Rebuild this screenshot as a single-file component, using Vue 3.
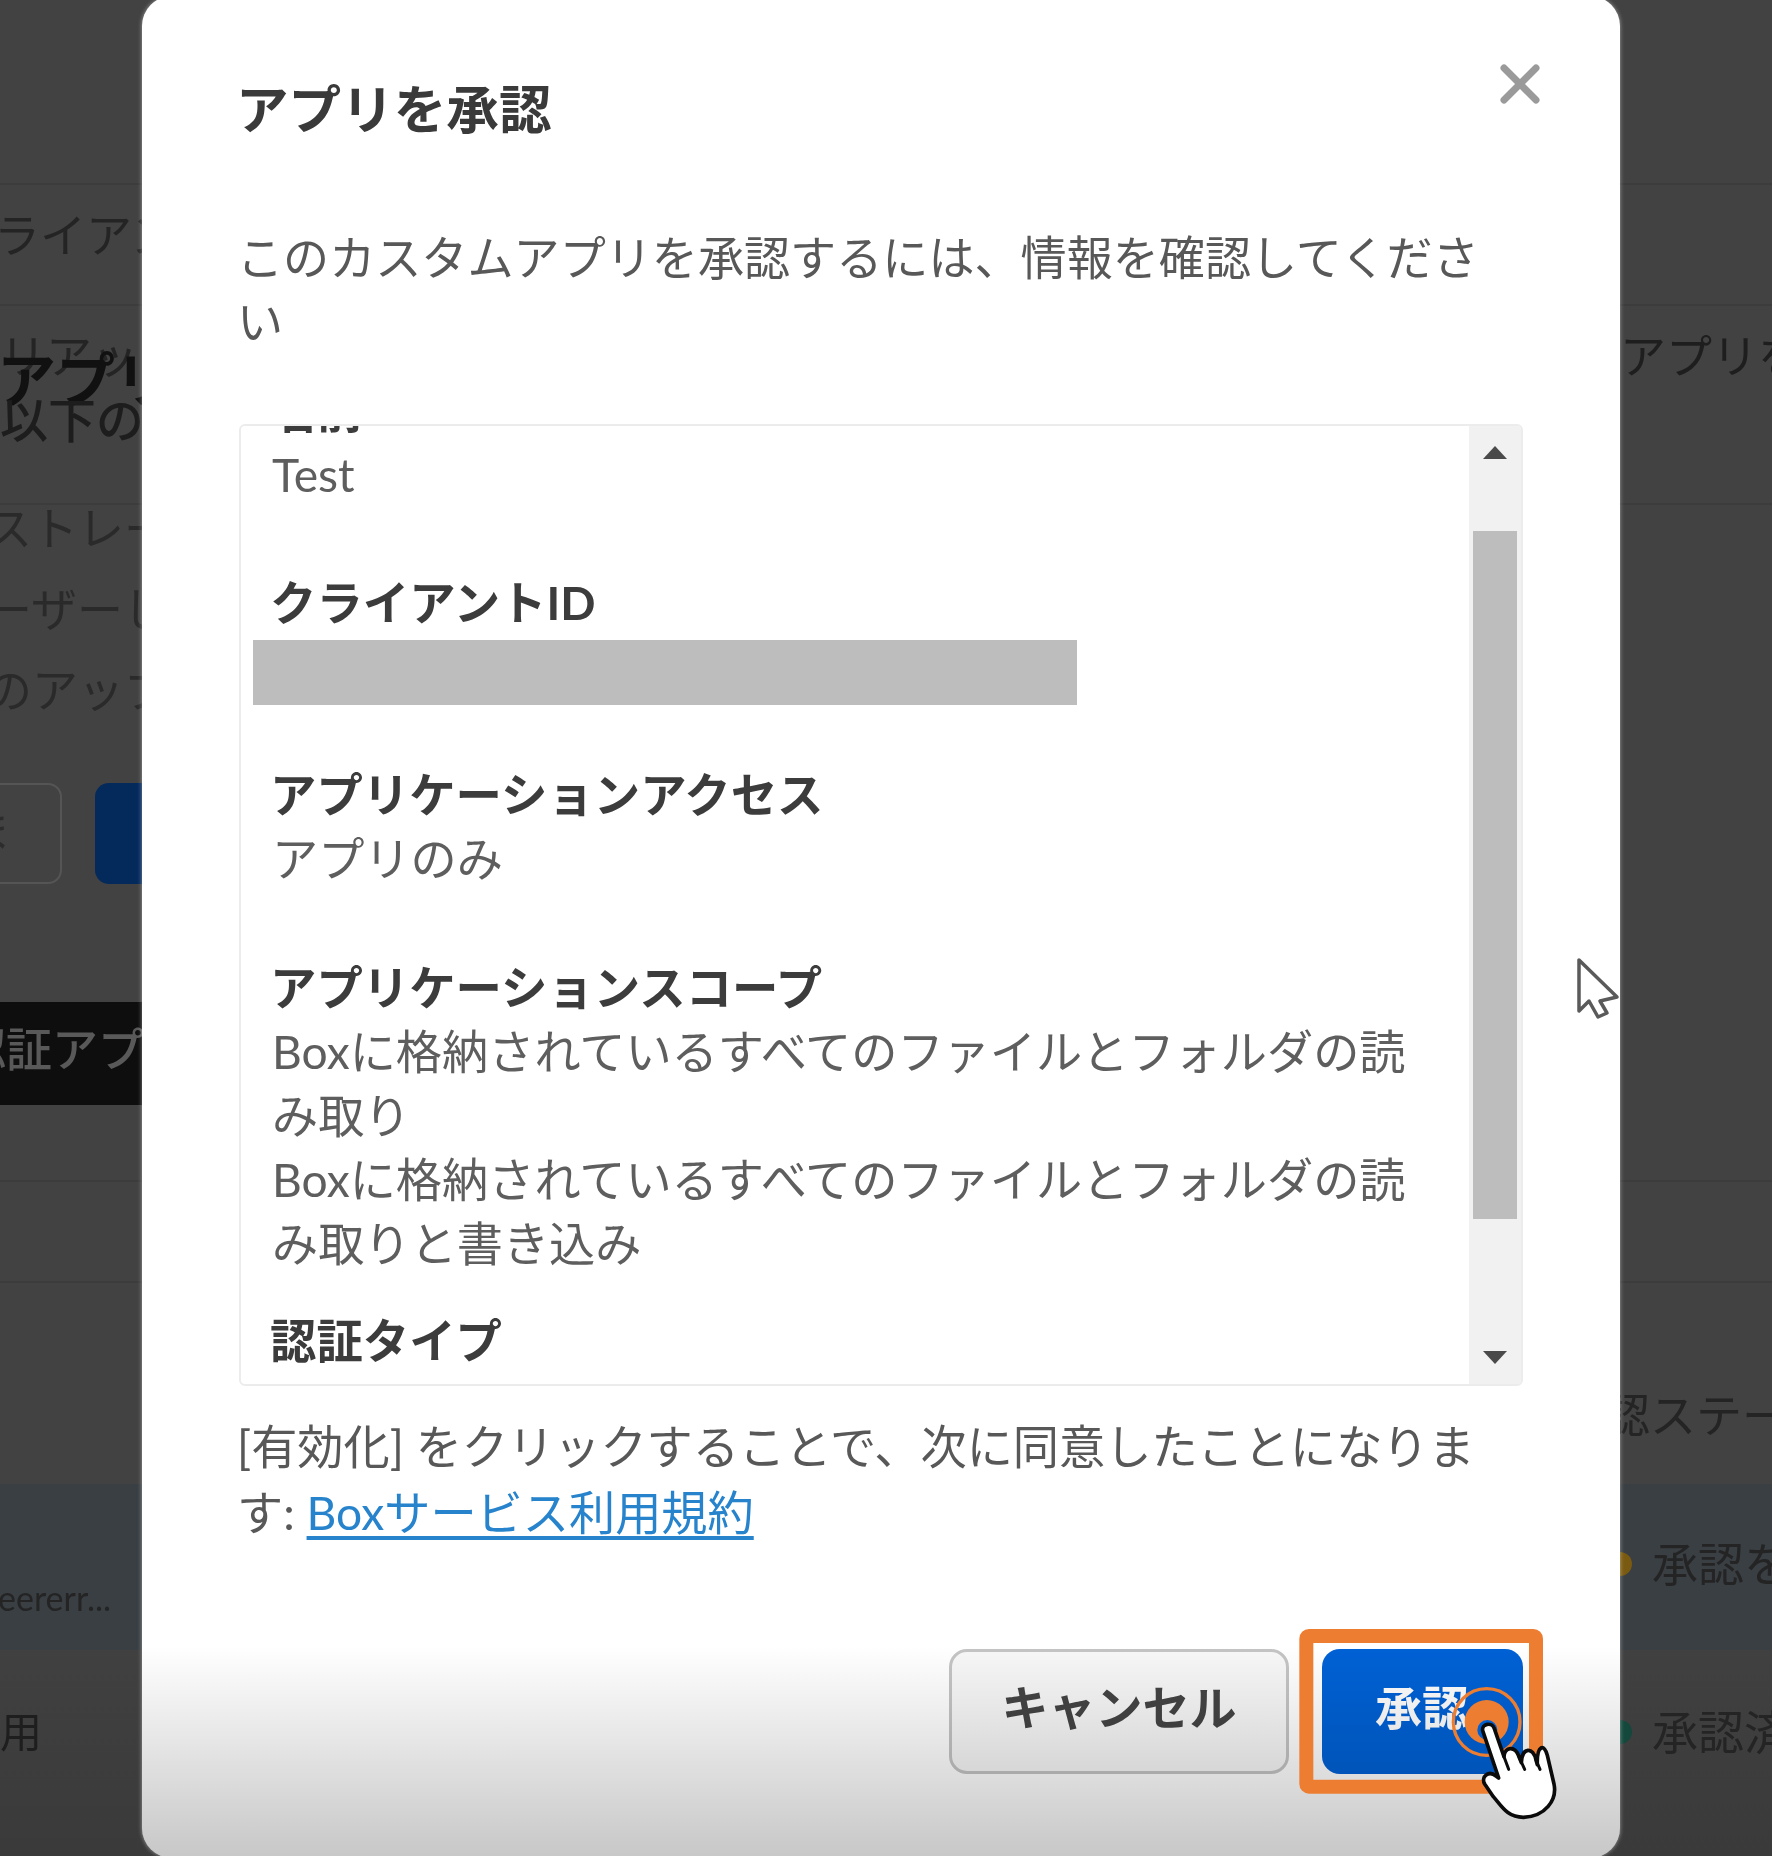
<script setup>
const scopes = [
  'Boxに格納されているすべてのファイルとフォルダの読み取り',
  'Boxに格納されているすべてのファイルとフォルダの読み取りと書き込み'
]
</script>

<template>
  <div class="page">
    <!-- dimmed admin console behind the dialog -->
    <div class="backdrop">
      <div class="row r-top"></div>
      <div class="row r-client">
        <span class="bg-text client">クライアントID</span>
      </div>
      <div class="row r-head">
        <div class="left">
          <div class="bg-text tab">リアッ</div>
          <div class="bg-text heading">アプリ</div>
          <div class="bg-text sub">以下の項目</div>
        </div>
        <div class="right bg-text strong">アプリを</div>
      </div>
      <div class="row r-list">
        <div class="left">
          <div class="bg-text list-line">ストレージ</div>
          <div class="bg-text list-line">ーザーし</div>
          <div class="bg-text list-line">のアップ</div>
        </div>
      </div>
      <div class="row r-actions">
        <div class="bg-btn outline"><span>ま</span></div>
        <div class="bg-btn solid"></div>
      </div>
      <div class="row r-band">
        <div class="band"><span>認証アプリ</span></div>
      </div>
      <div class="row r-line"></div>
      <div class="row r-line2"></div>
      <div class="row r-columns">
        <div class="right bg-text">認ステータス</div>
      </div>
      <div class="row r-pending">
        <div class="bg-text small-id">eererr...</div>
        <div class="right status">
          <i class="dot amber"></i>
          <span class="bg-text">承認を待</span>
        </div>
      </div>
      <div class="row r-approved">
        <div class="bg-text use">用</div>
        <div class="right status">
          <i class="dot green"></i>
          <span class="bg-text">承認済み</span>
        </div>
      </div>
    </div>

    <div class="modal">
      <header class="modal-head">
        <h1>アプリを承認</h1>
        <svg class="close" viewBox="0 0 40 40" width="40" height="40">
          <path d="M4 4 L36 36 M36 4 L4 36" stroke="#9a9a9a" stroke-width="7" stroke-linecap="round" />
        </svg>
      </header>

      <p class="intro">このカスタムアプリを承認するには、情報を確認してくださ<br />い</p>

      <div class="details">
        <div class="details-body">
          <section>
            <h2>名前</h2>
            <div class="value">Test</div>
          </section>
          <section class="client-id">
            <h2>クライアントID</h2>
            <div class="redacted"></div>
          </section>
          <section>
            <h2>アプリケーションアクセス</h2>
            <div class="value">アプリのみ</div>
          </section>
          <section class="scopes">
            <h2>アプリケーションスコープ</h2>
            <div v-for="scope in scopes" :key="scope" class="value">{{ scope }}</div>
          </section>
          <section>
            <h2>認証タイプ</h2>
            <div class="value">OAuth 2.0 with JWT</div>
          </section>
        </div>
        <div class="scrollbar">
          <span class="arrow up"></span>
          <span class="thumb"></span>
          <span class="arrow down"></span>
        </div>
      </div>

      <p class="terms">[有効化] をクリックすることで、次に同意したことになりま<br />す: <a>Boxサービス利用規約</a></p>

      <div class="buttons">
        <button type="button" class="btn cancel">キャンセル</button>
        <button type="button" class="btn approve">承認</button>
      </div>

      <div class="fade"></div>
    </div>

    <!-- tutorial annotations on top of the video frame -->
    <svg class="pointer" viewBox="0 0 48 66" width="48" height="66">
      <path d="M4 4 L4 55 L14 45 L23 61 L32 57 L25 45 L42 41 Z" fill="#fff" stroke="#5a5a5a" stroke-width="3.5" stroke-linejoin="round" />
    </svg>

    <svg class="callout" viewBox="0 0 1200 768" width="400" height="256">
      <rect x="169" y="108" width="689" height="452" rx="8" fill="none" stroke="#ed7d31" stroke-width="42" />
      <circle cx="710" cy="366" r="100" fill="none" stroke="#ed7d31" stroke-width="10" />
      <circle cx="710" cy="366" r="66" fill="#ed7d31" />
      <circle cx="712" cy="390" r="30" fill="#0061d5" />
      <path
        d="M698 392 C694 372 726 364 733 386 L762 470 C764 438 796 438 806 468 L814 488 C816 440 850 440 858 480 L862 494 C860 432 884 432 892 466 L912 552 C922 600 886 650 820 652 C772 652 756 620 730 590 L704 552 C692 530 716 510 738 528 L746 534 Z"
        fill="#fff"
        stroke="#0b0b0b"
        stroke-width="11"
        stroke-linejoin="round"
      />
      <path d="M762 470 L776 508 M806 468 L824 508 M858 480 L870 508" fill="none" stroke="#0b0b0b" stroke-width="9" stroke-linecap="round" />
    </svg>
  </div>
</template>

<style>
html,
body {
  background: #424242;
}
</style>

<style scoped>
.page {
  position: relative;
  width: 1772px;
  height: 1856px;
  overflow: hidden;
  font-family: Lato, "Noto Sans CJK JP", sans-serif;
  font-size: 46px;
  line-height: 64px;
  background: linear-gradient(#424242 1600px, #3a3a3a);
  filter: blur(0.6px);
}

/* backdrop */
.backdrop {
  display: flex;
  flex-direction: column;
  height: 100%;
}

.row {
  display: flex;
  justify-content: space-between;
  flex-shrink: 0;
  white-space: nowrap;
  border-bottom: 2px solid #3c3c3c;
}

.left {
  width: 142px;
  overflow: hidden;
}

.right {
  width: 162px;
  overflow: hidden;
  margin-left: auto;
}

.bg-text {
  color: #242424;
}

.bg-text.strong {
  color: #1e1e1e;
}

.r-top {
  height: 183px;
}

.r-client {
  height: 121px;
  padding-top: 18px;
  box-sizing: border-box;
}

.client {
  margin-left: -52px;
}

.r-head {
  height: 199px;
  padding-top: 18px;
  box-sizing: border-box;
}

.tab {
  color: #242424;
}

.heading {
  margin-top: -40px;
  margin-left: -3px;
  font-size: 59px;
  font-weight: 700;
  color: #111;
}

.sub {
  margin-top: -24px;
  font-size: 48px;
  font-weight: 500;
  color: #1d1d1d;
}

.r-head .right {
  width: 152px;
}

.r-list {
  height: 257px;
  box-sizing: border-box;
  border-bottom: 0;
}

.r-list .left {
  overflow: visible;
  clip-path: inset(0 0 0 0);
}

.list-line {
  line-height: 81px;
  margin-left: -14px;
  color: #2a2a2a;
}

.list-line:first-child {
  margin-top: -18px;
}

.r-actions {
  height: 240px;
  box-sizing: border-box;
  padding-top: 21px;
  justify-content: flex-start;
  gap: 33px;
  margin-left: -40px;
  border-bottom: 0;
}

.bg-btn {
  height: 101px;
  border-radius: 14px;
  box-sizing: border-box;
}

.outline {
  width: 102px;
  border: 2px solid #555;
  color: #2c2c2c;
  padding-left: 3px;
  line-height: 92px;
}

.solid {
  width: 140px;
  background: #042a5c;
}

.r-band {
  height: 103px;
  border-bottom: 0;
}

.band {
  width: 150px;
  overflow: hidden;
  background: #0e0e0e;
  color: #595959;
  font-weight: 500;
  line-height: 94px;
}

.band span {
  margin-left: -40px;
  display: inline-block;
}

.r-line {
  height: 77px;
  box-sizing: border-box;
}

.r-line2 {
  height: 101px;
  box-sizing: border-box;
}

.r-columns {
  height: 201px;
  box-sizing: border-box;
  padding-top: 100px;
  border-bottom: 0;
}

.r-columns .right {
  width: 168px;
}

.r-pending {
  height: 166px;
  box-sizing: border-box;
  background: #3a3f44;
  align-items: flex-start;
  border-bottom: 0;
}

.small-id {
  margin-left: -2px;
  margin-top: 82px;
  font-size: 34px;
}

.status {
  display: flex;
  align-items: center;
  gap: 20px;
}

.r-pending .status {
  margin-top: 48px;
}

.r-approved {
  flex: 1;
  border-bottom: 0;
  align-items: flex-start;
}

.use {
  margin-top: 50px;
  font-size: 42px;
  color: #1e1e1e;
}

.r-approved .status {
  margin-top: 50px;
}

.dot {
  width: 24px;
  height: 24px;
  margin-left: -2px;
  border-radius: 50%;
  flex-shrink: 0;
}

.amber {
  background: #7a5a10;
}

.green {
  background: #14483c;
}

/* dialog */
.modal {
  position: absolute;
  left: 142px;
  top: -4px;
  width: 1478px;
  height: 1862px;
  box-sizing: border-box;
  padding: 79px 97px 0;
  background: #fff;
  border-radius: 30px;
  overflow: hidden;
  box-shadow: 0 0 4px rgba(255, 255, 255, 0.5);
}

.modal-head {
  display: flex;
  justify-content: space-between;
  align-items: flex-start;
}

.modal-head h1 {
  margin: 0 0 0 -3px;
  font-size: 52.6px;
  line-height: 68px;
  font-weight: 700;
  color: #3a3a3a;
}

.close {
  margin: -11px -17px 0 0;
}

.intro {
  margin: 82px 0 0 -2px;
  font-size: 46.1px;
  color: #585858;
}

.details {
  display: flex;
  height: 962px;
  margin-top: 71px;
  box-sizing: border-box;
  border: 2px solid #ececec;
  border-radius: 6px;
  overflow: hidden;
}

.details-body {
  flex: 1;
  min-width: 0;
  overflow: hidden;
  padding: 0 30px 0 31px;
}

.details-body section {
  margin-bottom: 64px;
}

.details-body section:first-child {
  margin-top: -48px;
}

.details-body section.client-id {
  margin-bottom: 57px;
}

.details-body section.scopes {
  margin-bottom: 32px;
}

.details-body h2 {
  margin: 0 0 0 -2px;
  font-size: 46.4px;
  line-height: 64px;
  font-weight: 700;
  color: #3c3c3c;
}

.value {
  font-size: 46.2px;
  line-height: 64.3px;
  color: #5e5e5e;
}

.redacted {
  width: 824px;
  height: 65px;
  margin: 6px 0 0 -19px;
  background: #bdbdbd;
}

.scrollbar {
  display: grid;
  grid-template-rows: 105px 688px 1fr;
  justify-items: center;
  width: 52px;
  flex-shrink: 0;
  background: #f1f1f1;
}

.thumb {
  width: 44px;
  height: 100%;
  background: #bdbdbd;
}

.arrow {
  width: 0;
  height: 0;
  border-left: 12px solid transparent;
  border-right: 12px solid transparent;
}

.arrow.up {
  margin-top: 20px;
  border-bottom: 13px solid #4a4a4a;
}

.arrow.down {
  align-self: end;
  margin-bottom: 20px;
  border-top: 13px solid #4a4a4a;
}

.terms {
  margin: 27px 0 0 -2px;
  font-size: 46.2px;
  line-height: 66px;
  color: #585858;
}

.terms a {
  color: #2683cc;
  text-decoration: underline;
  text-decoration-thickness: 4px;
  text-underline-offset: 6px;
}

.buttons {
  display: flex;
  justify-content: flex-end;
  gap: 33px;
  margin-top: 104px;
}

.btn {
  height: 125px;
  box-sizing: border-box;
  border-radius: 18px;
  font-family: inherit;
  font-size: 47px;
  font-weight: 700;
  padding: 0 0 14px;
}

.cancel {
  width: 340px;
  border: 3px solid #c4c4c4;
  background: #f7f7f7;
  color: #444;
}

.approve {
  width: 201px;
  border: 0;
  background: #0061d5;
  color: #fff;
  text-align: left;
  padding-left: 53px;
}

.fade {
  position: absolute;
  left: 0;
  right: 0;
  bottom: 0;
  height: 212px;
  background: linear-gradient(rgba(0, 0, 0, 0), rgba(0, 0, 0, 0.22));
  pointer-events: none;
}

/* annotations */
.pointer {
  position: absolute;
  left: 1575px;
  top: 956px;
}

.callout {
  position: absolute;
  left: 1250px;
  top: 1600px;
}
</style>
